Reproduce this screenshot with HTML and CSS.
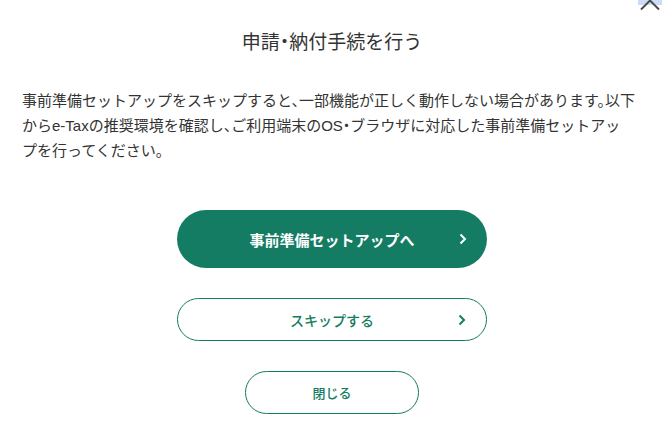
FILE: index.html
```html
<!DOCTYPE html>
<html lang="ja">
<head>
    <meta charset="UTF-8">
    <title>申請・納付手続を行う</title>
    <link rel="stylesheet" href="styles.css">
</head>
<body>
    <div class="modal">
        <button class="close-btn" aria-label="閉じる">
            <svg width="30" height="12" viewBox="0 0 30 12">
                <rect x="2" y="0" width="24" height="5" fill="#cbdcf7"/>
                <path d="M5 9.5 L14 0.5 L23 9.5" fill="none" stroke="#4a4a4a" stroke-width="2"/>
            </svg>
        </button>

        <h2 class="modal-title">申請・納付手続を行う</h2>

        <p class="modal-text">事前準備セットアップをスキップすると、一部機能が正しく動作しない場合があります。以下<br>からe-Taxの推奨環境を確認し、ご利用端末のOS・ブラウザに対応した事前準備セットアッ<br>プを行ってください。</p>

        <div class="btn-list">
            <a class="btn btn-primary" href="#">
                <span>事前準備セットアップへ</span>
                <svg class="chevron" width="8" height="12" viewBox="0 0 8 12"><path d="M1.5 1.5 L6 6 L1.5 10.5" fill="none" stroke="currentColor" stroke-width="2"/></svg>
            </a>
            <a class="btn btn-outline" href="#">
                <span>スキップする</span>
                <svg class="chevron" width="8" height="12" viewBox="0 0 8 12"><path d="M1.5 1.5 L6 6 L1.5 10.5" fill="none" stroke="currentColor" stroke-width="2"/></svg>
            </a>
            <a class="btn btn-outline btn-small" href="#">
                <span>閉じる</span>
            </a>
        </div>
    </div>
</body>
</html>
```

FILE: styles.css
```css
* {
    box-sizing: border-box;
    margin: 0;
    padding: 0;
}
html, body {
    background-color: white;
    font-family: "Liberation Sans", "Noto Sans CJK JP", sans-serif;
    color: #333;
}
.modal {
    position: relative;
    padding: 30px 25px 0 22px;
    font-feature-settings: "halt";
}
.close-btn {
    position: absolute;
    top: 0;
    right: 1px;
    padding: 0;
    border: none;
    background: none;
    line-height: 0;
}
.modal-title {
    font-size: 19px;
    font-weight: 400;
    line-height: 26px;
    text-align: center;
}
.modal-text {
    margin-top: 32px;
    font-size: 15px;
    line-height: 25px;
    white-space: nowrap;
}
.btn-list {
    display: flex;
    flex-direction: column;
    align-items: center;
    gap: 30px;
    margin-top: 47px;
}
.btn {
    position: relative;
    display: flex;
    align-items: center;
    justify-content: center;
    width: 310px;
    height: 43px;
    border-radius: 30px;
    text-decoration: none;
    font-size: 14px;
    font-weight: 500;
}
.btn-primary {
    height: 58px;
    background-color: #137c63;
    color: white;
    font-size: 15px;
    font-weight: 700;
}
.btn-outline {
    border: 1px solid #137c63;
    color: #137c63;
}
.btn-small {
    width: 174px;
    font-size: 13px;
}
.chevron {
    position: absolute;
    right: 20px;
    top: 50%;
    margin-top: -6px;
}
```
